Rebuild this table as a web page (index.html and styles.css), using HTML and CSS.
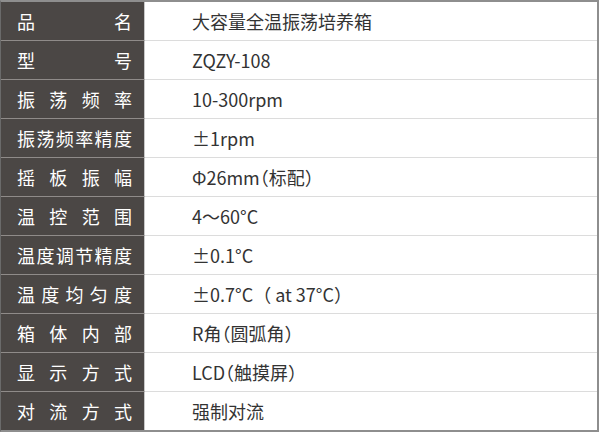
FILE: index.html
```html
<!DOCTYPE html>
<html lang="zh-CN">
<head>
<meta charset="utf-8">
<title>大容量全温振荡培养箱</title>
<link rel="stylesheet" href="styles.css">
</head>
<body>
<table class="spec">
  <tbody>
    <tr><th><span class="lbl">品名</span></th><td>大容量全温振荡培养箱</td></tr>
    <tr><th><span class="lbl">型号</span></th><td>ZQZY-108</td></tr>
    <tr><th><span class="lbl">振荡频率</span></th><td>10-300rpm</td></tr>
    <tr><th><span class="lbl">振荡频率精度</span></th><td>±1rpm</td></tr>
    <tr><th><span class="lbl">摇板振幅</span></th><td class="hw">Φ26mm（标配）</td></tr>
    <tr><th><span class="lbl">温控范围</span></th><td>4～60°C</td></tr>
    <tr><th><span class="lbl">温度调节精度</span></th><td>±0.1°C</td></tr>
    <tr><th><span class="lbl">温度均匀度</span></th><td>±0.7°C（ at 37°C）</td></tr>
    <tr><th><span class="lbl">箱体内部</span></th><td class="hw">R角（圆弧角）</td></tr>
    <tr><th><span class="lbl">显示方式</span></th><td class="hw">LCD（触摸屏）</td></tr>
    <tr><th><span class="lbl">对流方式</span></th><td>强制对流</td></tr>
  </tbody>
</table>
</body>
</html>
```
FILE: styles.css
```css
html, body {
  margin: 0;
  padding: 0;
  background: #ffffff;
}
body {
  font-family: "Noto Sans CJK SC", "Noto Sans", sans-serif;
}
.spec {
  width: 599px;
  border-collapse: separate;
  border-spacing: 0;
  border-top: 2px solid #8e8e8e;
  border-right: 2px solid #8e8e8e;
  border-bottom: 2px solid #8e8e8e;
  border-left: 1px solid #6a6a6a;
}
.spec th,
.spec td {
  height: 38px;
  padding: 0;
  font-size: 18px;
  line-height: 38px;
  border-bottom: 1px solid #dcdcdc;
  vertical-align: middle;
}
.spec tr:last-child th,
.spec tr:last-child td {
  border-bottom: none;
}
.spec th {
  width: 144px;
  background: #4b4745;
  color: #ffffff;
  font-weight: normal;
  padding: 0 12px 0 16px;
  box-sizing: border-box;
  border-bottom-color: #8f8b89;
  border-right: 1px solid #c8c8c8;
}
.lbl {
  display: block;
  text-align: justify;
  text-align-last: justify;
}
.spec td {
  padding-left: 47px;
  color: #333333;
  text-align: left;
}
.spec td.hw {
  font-feature-settings: "halt";
}
```
